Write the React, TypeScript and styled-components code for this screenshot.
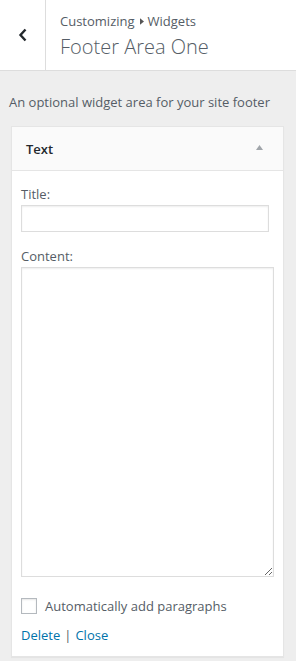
import styled, { createGlobalStyle } from "styled-components";

const GlobalStyle = createGlobalStyle`
  html, body {
    margin: 0;
    padding: 0;
    background: #eeeeee;
  }
  body {
    font-family: "Open Sans", "Noto Sans", sans-serif;
    color: #555;
    -webkit-font-smoothing: antialiased;
  }
  * { box-sizing: border-box; }
`;

const App = () => {
  return (
    <>
      <GlobalStyle />
      <StPanel>
        <StHeader>
          <StBack aria-label="Back">
            <svg width="10" height="14" viewBox="0 0 10 14">
              <path d="M7.5 1.5 L2.5 7 L7.5 12.5" fill="none" stroke="#23282d" strokeWidth="2.4" />
            </svg>
          </StBack>
          <StTitleBox>
            <StCrumb>
              Customizing
              <StCaret viewBox="0 0 5 8">
                <path d="M0 0 L5 4 L0 8 Z" fill="#555" />
              </StCaret>
              Widgets
            </StCrumb>
            <StTitle>Footer Area One</StTitle>
          </StTitleBox>
        </StHeader>

        <StDescription>An optional widget area for your site footer</StDescription>

        <StWidget>
          <StWidgetTop>
            <StWidgetName>Text</StWidgetName>
            <StArrow viewBox="0 0 10 7">
              <path d="M5 0 L10 7 L0 7 Z" fill="#a0a5aa" />
            </StArrow>
          </StWidgetTop>
          <StWidgetBody>
            <StField>
              <StLabel>Title:</StLabel>
              <StInput type="text" />
            </StField>
            <StField>
              <StLabel>Content:</StLabel>
              <StTextarea />
            </StField>
            <StCheckRow>
              <StCheckbox />
              <span>Automatically add paragraphs</span>
            </StCheckRow>
            <StActions>
              <StLink href="#">Delete</StLink>
              <StSep>|</StSep>
              <StLink href="#">Close</StLink>
            </StActions>
          </StWidgetBody>
        </StWidget>
      </StPanel>
    </>
  );
};

const StPanel = styled.div`
  width: 296px;
  min-height: 661px;
  background: #eeeeee;
  display: flex;
  flex-direction: column;
`;

const StHeader = styled.div`
  height: 71px;
  background: #fff;
  border-bottom: 1px solid #dddddd;
  display: flex;
`;

const StBack = styled.div`
  width: 46px;
  flex-shrink: 0;
  border-right: 1px solid #dddddd;
  display: flex;
  align-items: center;
  justify-content: center;
  padding-left: 1px;
`;

const StTitleBox = styled.div`
  padding: 11px 0 0 14px;
  display: flex;
  flex-direction: column;
`;

const StCrumb = styled.div`
  font-size: 13px;
  line-height: 20px;
  color: #555d66;
  display: flex;
  align-items: center;
`;

const StCaret = styled.svg`
  width: 4px;
  height: 7px;
  margin: 0 4px 0 5px;
`;

const StTitle = styled.div`
  font-size: 20px;
  line-height: 28px;
  font-weight: 300;
  color: #555d66;
  margin-top: 2px;
`;

const StDescription = styled.div`
  font-size: 13px;
  line-height: 20px;
  color: #555d66;
  padding: 21px 9px 0 9px;
`;

const StWidget = styled.div`
  margin: 14px 12px 4px 11px;
  background: #fff;
  border: 1px solid #e5e5e5;
  box-shadow: 0 1px 1px rgba(0, 0, 0, 0.04);
`;

const StWidgetTop = styled.div`
  height: 44px;
  background: #fafafa;
  border-bottom: 1px solid #e5e5e5;
  display: flex;
  align-items: center;
  justify-content: space-between;
  padding: 0 20px 0 14px;
`;

const StWidgetName = styled.div`
  font-size: 13px;
  font-weight: 600;
  color: #23282d;
`;

const StArrow = styled.svg`
  width: 7px;
  height: 5px;
  margin-bottom: 2px;
`;

const StWidgetBody = styled.div`
  padding: 14px 10px 12px 9px;
  display: flex;
  flex-direction: column;
`;

const StField = styled.div`
  display: flex;
  flex-direction: column;
  margin-bottom: 15px;
`;

const StLabel = styled.label`
  font-size: 13px;
  line-height: 18px;
  color: #555d66;
  margin-bottom: 2px;
`;

const StInput = styled.input`
  width: 248px;
  height: 27px;
  border: 1px solid #dddddd;
  box-shadow: inset 0 1px 2px rgba(0, 0, 0, 0.07);
  background: #fff;
  outline: none;
`;

const StTextarea = styled.textarea`
  width: 253px;
  height: 310px;
  border: 1px solid #dddddd;
  box-shadow: inset 0 1px 2px rgba(0, 0, 0, 0.07);
  background: #fff;
  outline: none;
  resize: both;
  margin: 0;
`;

const StCheckRow = styled.label`
  display: flex;
  align-items: center;
  gap: 8px;
  font-size: 13px;
  color: #555d66;
  margin-top: 5px;
`;

const StCheckbox = styled.span`
  width: 16px;
  height: 16px;
  border: 1px solid #b4b9be;
  background: #fff;
  box-shadow: inset 0 1px 2px rgba(0, 0, 0, 0.1);
  flex-shrink: 0;
`;

const StActions = styled.div`
  margin-top: 11px;
  font-size: 13px;
  line-height: 18px;
  display: flex;
  gap: 4px;
`;

const StLink = styled.a`
  color: #0073aa;
  text-decoration: none;
`;

const StSep = styled.span`
  color: #555d66;
`;

export default App;
